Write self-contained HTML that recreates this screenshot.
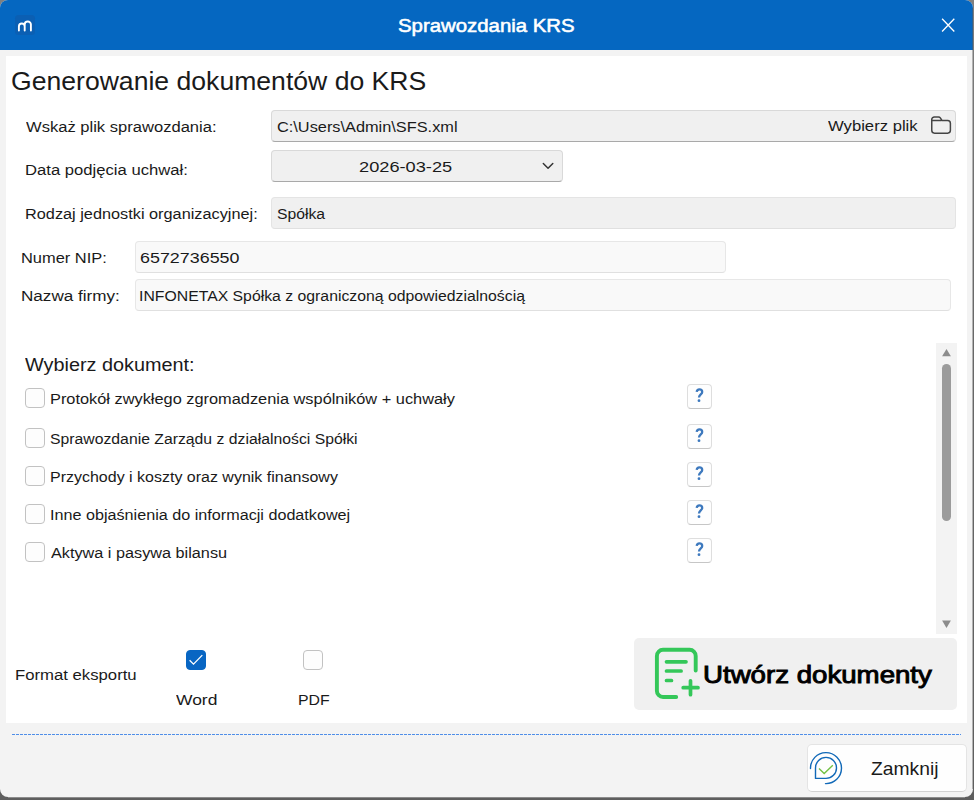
<!DOCTYPE html>
<html><head><meta charset="utf-8"><title>Sprawozdania KRS</title>
<style>
*{box-sizing:border-box;margin:0;padding:0}
html,body{width:974px;height:800px;overflow:hidden;background:linear-gradient(#808080,#6a6a6a 30%,#5e5e5e);font-family:"Liberation Sans",sans-serif;color:#1a1a1a}
.a{position:absolute}
.t{position:absolute;white-space:nowrap;transform-origin:0 0;color:#1a1a1a}
#win{position:absolute;left:0;top:0;width:973px;height:797px;background:#f3f3f3;border-radius:8px;overflow:hidden}
.inp{position:absolute;border:1px solid #d9d9d9;border-bottom-color:#a9a9a9;border-radius:4px;background:#f0f0f0}
.inp.d{border-color:#e4e4e4;border-bottom-color:#e0e0e0}
.inp.l{background:#f9f9f9;border-color:#e7e7e7;border-bottom-color:#e0e0e0}
.cb{position:absolute;width:20px;height:20px;border:1px solid #c2c2c2;border-radius:4px;background:#fdfdfd}
.q{position:absolute;left:687px;width:24.5px;height:25px;border:1px solid #dedede;border-bottom-color:#c6c6c6;border-radius:4px;background:#fefefe}
</style></head><body>
<div class="a" style="left:8px;top:797px;width:957px;height:1px;background:#8c8c8c"></div>
<div id="win">
<div class="a" style="left:0;top:0;width:973px;height:50px;background:#0567c1"></div>
<div class="a" style="left:15.3px;top:15px;width:19.5px;height:19.5px;border-radius:3.5px;background:#0b5fb3"></div>
<svg class="a" style="left:15px;top:15px" width="20" height="20" viewBox="0 0 20 20"><path d="M3.9 15.6 V11.4 a2.9 2.9 0 0 1 5.8 0 V15.6 M9.7 11 V9.6 a3.1 3.1 0 0 1 6.2 0 V15.6" fill="none" stroke="#fff" stroke-width="1.9" stroke-linecap="round"/></svg>
<svg class="a" style="left:940px;top:17px" width="16" height="16" viewBox="0 0 16 16"><path d="M2.100 1.800 L14.300 14.500 M14.300 1.800 L2.100 14.500" stroke="#fff" stroke-width="1.300" fill="none"/></svg>
<div class="a" style="left:6px;top:56px;width:961.3px;height:666.8px;background:#fff"></div>

<div class="inp" style="left:271px;top:110px;width:685px;height:32px"></div>
<svg class="a" style="left:930px;top:115px" width="22" height="20" viewBox="0 0 22 20"><path d="M1.750 4.600 a2.600 2.600 0 0 1 2.600 -2.600 h4.150 a2.200 2.200 0 0 1 1.800 0.900 l1.700 2.500 H17.600 a2.800 2.800 0 0 1 2.800 2.800 V15.350 a2.800 2.800 0 0 1 -2.800 2.800 H4.550 a2.800 2.800 0 0 1 -2.800 -2.800 Z M1.750 5.400 H11.500" fill="none" stroke="#454545" stroke-width="1.500" stroke-linejoin="round"/></svg>
<div class="inp" style="left:271px;top:150px;width:292px;height:32px"></div>
<svg class="a" style="left:541px;top:160px" width="14" height="12" viewBox="0 0 14 12"><path d="M2.300 3.400 L7.050 8.300 L11.800 3.400" fill="none" stroke="#333" stroke-width="1.450" stroke-linecap="round" stroke-linejoin="round"/></svg>
<div class="inp d" style="left:271px;top:197px;width:685px;height:32px"></div>
<div class="inp l" style="left:135px;top:241.4px;width:590.8px;height:31.2px"></div>
<div class="inp l" style="left:135px;top:279.4px;width:816px;height:31.200px"></div>

<div class="cb" style="left:24.8px;top:388px"></div><div class="q" style="top:384px"></div><svg class="a" style="left:695px;top:388px" width="9" height="15" viewBox="0 0 9 15"><path d="M1.700 3.900 C1.900 2.100 3.100 1.300 4.400 1.300 C6 1.300 7.200 2.300 7.200 3.900 C7.200 6.300 4 6.400 4 9.500" fill="none" stroke="#3d79be" stroke-width="2.300"/><circle cx="4" cy="12.700" r="1.400" fill="#3d79be"/></svg>
<div class="cb" style="left:24.8px;top:428px"></div><div class="q" style="top:424px"></div><svg class="a" style="left:695px;top:428px" width="9" height="15" viewBox="0 0 9 15"><path d="M1.700 3.900 C1.900 2.100 3.100 1.300 4.400 1.300 C6 1.300 7.200 2.300 7.200 3.900 C7.200 6.300 4 6.400 4 9.500" fill="none" stroke="#3d79be" stroke-width="2.300"/><circle cx="4" cy="12.700" r="1.400" fill="#3d79be"/></svg>
<div class="cb" style="left:24.8px;top:466.200px"></div><div class="q" style="top:462px"></div><svg class="a" style="left:695px;top:466px" width="9" height="15" viewBox="0 0 9 15"><path d="M1.700 3.900 C1.900 2.100 3.100 1.300 4.400 1.300 C6 1.300 7.200 2.300 7.200 3.900 C7.200 6.300 4 6.400 4 9.500" fill="none" stroke="#3d79be" stroke-width="2.300"/><circle cx="4" cy="12.700" r="1.400" fill="#3d79be"/></svg>
<div class="cb" style="left:24.8px;top:504.200px"></div><div class="q" style="top:500px"></div><svg class="a" style="left:695px;top:504px" width="9" height="15" viewBox="0 0 9 15"><path d="M1.700 3.900 C1.900 2.100 3.100 1.300 4.400 1.300 C6 1.300 7.200 2.300 7.200 3.900 C7.200 6.300 4 6.400 4 9.500" fill="none" stroke="#3d79be" stroke-width="2.300"/><circle cx="4" cy="12.700" r="1.400" fill="#3d79be"/></svg>
<div class="cb" style="left:24.8px;top:542.200px"></div><div class="q" style="top:538px"></div><svg class="a" style="left:695px;top:542px" width="9" height="15" viewBox="0 0 9 15"><path d="M1.700 3.900 C1.900 2.100 3.100 1.300 4.400 1.300 C6 1.300 7.200 2.300 7.200 3.900 C7.200 6.300 4 6.400 4 9.500" fill="none" stroke="#3d79be" stroke-width="2.300"/><circle cx="4" cy="12.700" r="1.400" fill="#3d79be"/></svg>

<div class="a" style="left:936px;top:343px;width:21px;height:290.600px;background:#f3f3f3"></div>
<div class="a" style="left:942px;top:364px;width:9px;height:157px;border-radius:4.500px;background:#9b9b9b"></div>
<svg class="a" style="left:941px;top:348px" width="11" height="9" viewBox="0 0 11 9"><path d="M5.500 0.900 L9.900 8.200 H1.100 Z" fill="#8c8c8c"/></svg>
<svg class="a" style="left:941px;top:620px" width="11" height="9" viewBox="0 0 11 9"><path d="M5.500 7.900 L9.900 0.400 H1.100 Z" fill="#8c8c8c"/></svg>

<div class="cb" style="left:186px;top:650px;background:#0866c3;border-color:#0866c3"></div>
<svg class="a" style="left:186px;top:650px" width="20" height="20" viewBox="0 0 20 20"><path d="M3.600 10.300 L7.500 14.100 L16.300 5.100" fill="none" stroke="#fff" stroke-width="1.300" stroke-linejoin="miter"/></svg>
<div class="cb" style="left:303px;top:650px"></div>

<div class="a" style="left:634.200px;top:638px;width:322.700px;height:71.800px;background:#f0f0f0;border-radius:5px"></div>
<svg class="a" style="left:650px;top:643px" width="56" height="60" viewBox="0 0 56 60"><path d="M26.200 54 H13 a6.100 6.100 0 0 1 -6.100 -6.100 V12.900 a6.100 6.100 0 0 1 6.100 -6.100 H39.600 a6.100 6.100 0 0 1 6.100 6.100 V27.600" fill="none" stroke="#34c759" stroke-width="3.900" stroke-linecap="round"/><path d="M16.500 18.800 H36 M16.500 28 H31.100 M16.500 37.500 H21.500 M33.200 44.700 H48 M40.500 37.800 V51.700" fill="none" stroke="#34c759" stroke-width="3.700" stroke-linecap="round"/></svg>

<div class="a" style="left:12px;top:734px;width:949px;height:1px;background:repeating-linear-gradient(90deg,#4f8ee8 0,#4f8ee8 3px,transparent 3px,transparent 4px)"></div>

<div class="a" style="left:807px;top:744px;width:160px;height:48px;background:#fefefe;border:1px solid #e4e4e4;border-bottom-color:#d2d2d2;border-radius:5px"></div>
<svg class="a" style="left:806px;top:748px" width="40" height="40" viewBox="0 0 40 40"><path d="M9.500 30.400 V19.900 a10.500 10.500 0 1 1 10.500 10.500 Z" fill="none" stroke="#1169b8" stroke-width="1.400" stroke-linejoin="round"/><path d="M4.500 20.600 A15.500 15.500 0 1 1 19.500 35.600" fill="none" stroke="#1169b8" stroke-width="1.400" stroke-linecap="round"/><path d="M13 20.400 L18.200 25.500 L26.800 17.300" fill="none" stroke="#72c043" stroke-width="1.400"/></svg>

<div class="t" style="left:397.90px;top:15px;font-size:18.8px;line-height:21px;transform:scaleX(1.0848);-webkit-text-stroke:0.55px #fff;color:#fff">Sprawozdania KRS</div>
<div class="t" style="left:11.48px;top:66px;font-size:26px;line-height:30px;transform:scaleX(1.0225)">Generowanie dokumentów do KRS</div>
<div class="t" style="left:26.40px;top:118px;font-size:15.3px;line-height:17px;transform:scaleX(1.0828)">Wskaż plik sprawozdania:</div>
<div class="t" style="left:25.31px;top:161px;font-size:15.3px;line-height:17px;transform:scaleX(1.0881)">Data podjęcia uchwał:</div>
<div class="t" style="left:25.34px;top:205px;font-size:15.3px;line-height:17px;transform:scaleX(1.0648)">Rodzaj jednostki organizacyjnej:</div>
<div class="t" style="left:21.33px;top:249px;font-size:15.3px;line-height:17px;transform:scaleX(1.0741)">Numer NIP:</div>
<div class="t" style="left:21.28px;top:287px;font-size:15.3px;line-height:17px;transform:scaleX(1.1179)">Nazwa firmy:</div>
<div class="t" style="left:276.50px;top:118px;font-size:15.3px;line-height:17px;transform:scaleX(1.0673)">C:\Users\Admin\SFS.xml</div>
<div class="t" style="left:828.40px;top:117px;font-size:15.3px;line-height:17px;transform:scaleX(1.0888)">Wybierz plik</div>
<div class="t" style="left:359.00px;top:158px;font-size:15.3px;line-height:17px;transform:scaleX(1.1912)">2026-03-25</div>
<div class="t" style="left:276.50px;top:205px;font-size:15.3px;line-height:17px;transform:scaleX(1.0283)">Spółka</div>
<div class="t" style="left:140.30px;top:249px;font-size:15.3px;line-height:17px;transform:scaleX(1.1695)">6572736550</div>
<div class="t" style="left:139.27px;top:287px;font-size:15.3px;line-height:17px;transform:scaleX(1.0324)">INFONETAX Spółka z ograniczoną odpowiedzialnością</div>
<div class="t" style="left:25.00px;top:354px;font-size:18.3px;line-height:21px;transform:scaleX(1.0849)">Wybierz dokument:</div>
<div class="t" style="left:49.63px;top:390px;font-size:15.3px;line-height:17px;transform:scaleX(1.0689)">Protokół zwykłego zgromadzenia wspólników + uchwały</div>
<div class="t" style="left:50.00px;top:430px;font-size:15.3px;line-height:17px;transform:scaleX(1.0307)">Sprawozdanie Zarządu z działalności Spółki</div>
<div class="t" style="left:49.65px;top:468px;font-size:15.3px;line-height:17px;transform:scaleX(1.0452)">Przychody i koszty oraz wynik finansowy</div>
<div class="t" style="left:49.64px;top:506px;font-size:15.3px;line-height:17px;transform:scaleX(1.0569)">Inne objaśnienia do informacji dodatkowej</div>
<div class="t" style="left:50.70px;top:544px;font-size:15.3px;line-height:17px;transform:scaleX(1.0618)">Aktywa i pasywa bilansu</div>
<div class="t" style="left:15.41px;top:666px;font-size:15.3px;line-height:17px;transform:scaleX(1.0923)">Format eksportu</div>
<div class="t" style="left:176.10px;top:691px;font-size:15.3px;line-height:17px;transform:scaleX(1.1408)">Word</div>
<div class="t" style="left:297.56px;top:691px;font-size:15.3px;line-height:17px;transform:scaleX(1.0359)">PDF</div>
<div class="t" style="left:703.41px;top:661px;font-size:24.6px;line-height:27px;transform:scaleX(1.1238);-webkit-text-stroke:0.95px #000;color:#000">Utwórz dokumenty</div>
<div class="t" style="left:870.90px;top:758px;font-size:18.4px;line-height:21px;transform:scaleX(1.0476)">Zamknij</div>
</div>
<div class="a" style="left:972px;top:8px;width:1px;height:781px;background:rgba(90,90,90,.42)"></div>
</body></html>
